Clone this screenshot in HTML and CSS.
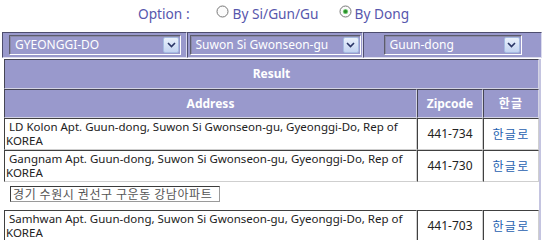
FILE: index.html
```html
<!DOCTYPE html>
<html>
<head>
<meta charset="utf-8">
<link rel="stylesheet" href="styles.css">
</head>
<body>
<div class="options">
  <span class="opt-label">Option :</span>
  <svg class="radio r1" width="13" height="13" viewBox="0 0 13 13"><circle cx="6.5" cy="6.5" r="5.5" fill="#fbfbfb" stroke="#777"/></svg>
  <span class="opt-text">By Si/Gun/Gu</span>
  <svg class="radio r2" width="13" height="13" viewBox="0 0 13 13"><circle cx="6.5" cy="6.5" r="5.5" fill="#fbfbfb" stroke="#777"/><circle cx="6.5" cy="6.5" r="2.6" fill="#7ccf7c"/><circle cx="6.5" cy="6.5" r="1.7" fill="#2a8f2a"/></svg>
  <span class="opt-text">By Dong</span>
</div>
<div class="bar">
  <div class="bar-cell c1">
    <div class="sel s1"><span class="sel-text">GYEONGGI-DO</span><span class="sel-btn"><svg width="9" height="6" viewBox="0 0 9 6"><path d="M1 1 L4.5 4.5 L8 1" fill="none" stroke="#2a3566" stroke-width="1.6"/></svg></span></div>
  </div>
  <div class="bar-cell c2">
    <div class="sel s2"><span class="sel-text">Suwon Si Gwonseon-gu</span><span class="sel-btn"><svg width="9" height="6" viewBox="0 0 9 6"><path d="M1 1 L4.5 4.5 L8 1" fill="none" stroke="#2a3566" stroke-width="1.6"/></svg></span></div>
  </div>
  <div class="bar-cell c3">
    <div class="sel s3"><span class="sel-text">Guun-dong</span><span class="sel-btn"><svg width="9" height="6" viewBox="0 0 9 6"><path d="M1 1 L4.5 4.5 L8 1" fill="none" stroke="#2a3566" stroke-width="1.6"/></svg></span></div>
  </div>
</div>
<table class="result">
  <colgroup><col class="col-addr"><col class="col-zip"><col class="col-kor"></colgroup>
  <tr><th colspan="3" class="th-title">Result</th></tr>
  <tr><th class="th-sub">Address</th><th class="th-sub">Zipcode</th><th class="th-sub th-kor">한글</th></tr>
  <tr><td class="addr">&nbsp;LD Kolon Apt. Guun-dong, Suwon Si Gwonseon-gu, Gyeonggi-Do, Rep of<br>KOREA</td><td class="zip">441-734</td><td class="kor"><a href="#">한글로</a></td></tr>
  <tr><td class="addr">&nbsp;Gangnam Apt. Guun-dong, Suwon Si Gwonseon-gu, Gyeonggi-Do, Rep of<br>KOREA</td><td class="zip">441-730</td><td class="kor"><a href="#">한글로</a></td></tr>
  <tr><td colspan="3" class="input-cell"><div class="kor-input">경기 수원시 권선구 구운동 강남아파트</div></td></tr>
  <tr><td class="addr">&nbsp;Samhwan Apt. Guun-dong, Suwon Si Gwonseon-gu, Gyeonggi-Do, Rep of<br>KOREA</td><td class="zip">441-703</td><td class="kor"><a href="#">한글로</a></td></tr>
</table>
</body>
</html>
```
FILE: styles.css
```css
body {
  margin: 0;
  background: #ffffff;
  font-family: "Noto Sans", "Noto Sans CJK KR", sans-serif;
}

.options {
  display: flex;
  align-items: center;
  height: 26px;
  padding: 0 0 6px 138px;
  color: #5757ad;
  font-size: 13.7px;
}

.radio {
  flex: none;
  margin-bottom: 4px;
}

.r1 {
  margin-left: 26px;
  margin-right: 4px;
}

.r2 {
  margin-left: 20px;
  margin-right: 3px;
}

.bar {
  display: flex;
  margin-left: 2px;
  width: 540px;
  height: 26px;
}

.bar-cell {
  box-sizing: border-box;
  height: 26px;
  background: #9999cc;
  border: 1px solid;
  border-color: #4d4d6e #dcdcee #dcdcee #4d4d6e;
  display: flex;
  justify-content: center;
  align-items: flex-start;
  padding-top: 2px;
}

.c1 { width: 185px; padding-left: 1px; }
.c2 { width: 176px; }
.c3 { width: 179px; }

.sel {
  box-sizing: border-box;
  height: 20px;
  background: #9999cc;
  border: 1px solid;
  border-color: #5c5c6c #ffffff #ffffff #5c5c6c;
  box-shadow: inset 1px 1px 0 #8a8aa8;
  display: flex;
  align-items: center;
  justify-content: space-between;
  padding: 0 1px 0 5px;
  color: #ffffff;
  font-size: 12px;
}

.s1 { width: 172px; }
.s2 { width: 171px; }
.s3 { width: 138px; }

.sel-text {
  white-space: nowrap;
  line-height: 16px;
}

.sel-btn {
  box-sizing: border-box;
  width: 16px;
  height: 16px;
  background: linear-gradient(#eaf1fc, #c3d3f1);
  border: 1px solid #a6bbe2;
  border-radius: 2px;
  display: flex;
  align-items: center;
  justify-content: center;
}

.result {
  margin: 1px 0 0 4px;
  width: 537px;
  table-layout: fixed;
  border-collapse: separate;
  border-spacing: 0;
  border-right: 2px solid #c4c4e0;
  font-size: 12px;
}

.col-addr { width: 413px; }
.col-zip { width: 66px; }
.col-kor { width: 56px; }

.result th {
  background: #9999cc;
  color: #ffffff;
  font-weight: bold;
  line-height: 14px;
  border: 1px solid;
  border-color: #454555 #d4d4e4 #d4d4e4 #454555;
  text-align: center;
}

.th-title {
  padding: 7px 1px 7px;
}

.th-sub {
  padding: 7px 1px 6px;
}

.th-kor {
  letter-spacing: 1.3px;
}

.result td {
  background: #ffffff;
  line-height: 14px;
  border: 1px solid;
  border-color: #404040 #cfcfcf #cfcfcf #404040;
  padding: 1px 1px;
  color: #222222;
}

.addr {
  vertical-align: top;
  text-align: left;
  white-space: nowrap;
  font-size: 11.5px;
}

.zip {
  text-align: center;
  vertical-align: middle;
  color: #333333;
}

.kor {
  text-align: center;
  vertical-align: middle;
}

.kor a {
  color: #1f5faf;
  text-decoration: none;
  font-family: "Noto Sans CJK KR", sans-serif;
  letter-spacing: 1.3px;
}

.result td.input-cell {
  border: none;
  padding: 4px 0 8px 6px;
}

.kor-input {
  box-sizing: border-box;
  width: 210px;
  height: 16px;
  border: 1px solid;
  border-color: #3c3c3c #9a9a9a #9a9a9a #3c3c3c;
  padding-left: 2px;
  font-family: "Noto Sans CJK KR", sans-serif;
  font-size: 12px;
  line-height: 14px;
  letter-spacing: 0.6px;
  color: #555555;
  white-space: nowrap;
}
```
